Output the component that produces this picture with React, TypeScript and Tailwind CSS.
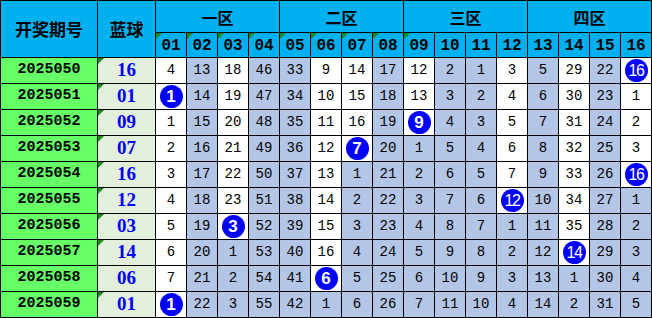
import React from "react";

const rows: { p: string; b: string; v: (number | string)[] }[] = [
  { p: "2025050", b: "16", v: [4, 13, 18, 46, 33, 9, 14, 17, 12, 2, 1, 3, 5, 29, 22, "H16"] },
  { p: "2025051", b: "01", v: ["H1", 14, 19, 47, 34, 10, 15, 18, 13, 3, 2, 4, 6, 30, 23, 1] },
  { p: "2025052", b: "09", v: [1, 15, 20, 48, 35, 11, 16, 19, "H9", 4, 3, 5, 7, 31, 24, 2] },
  { p: "2025053", b: "07", v: [2, 16, 21, 49, 36, 12, "H7", 20, 1, 5, 4, 6, 8, 32, 25, 3] },
  { p: "2025054", b: "16", v: [3, 17, 22, 50, 37, 13, 1, 21, 2, 6, 5, 7, 9, 33, 26, "H16"] },
  { p: "2025055", b: "12", v: [4, 18, 23, 51, 38, 14, 2, 22, 3, 7, 6, "H12", 10, 34, 27, 1] },
  { p: "2025056", b: "03", v: [5, 19, "H3", 52, 39, 15, 3, 23, 4, 8, 7, 1, 11, 35, 28, 2] },
  { p: "2025057", b: "14", v: [6, 20, 1, 53, 40, 16, 4, 24, 5, 9, 8, 2, 12, "H14", 29, 3] },
  { p: "2025058", b: "06", v: [7, 21, 2, 54, 41, "H6", 5, 25, 6, 10, 9, 3, 13, 1, 30, 4] },
  { p: "2025059", b: "01", v: ["H1", 22, 3, 55, 42, 1, 6, 26, 7, 11, 10, 4, 14, 2, 31, 5] },
];

const lastHit: number[] = Array.from({ length: 16 }, (_, c) => {
  let last = -1;
  rows.forEach((r, i) => {
    if (typeof r.v[c] === "string") last = i;
  });
  return last;
});

const Tri = () => (
  <span className="absolute top-0 left-0 w-[6px] h-[6px] bg-[#1a8a1a] [clip-path:polygon(0_0,100%_0,0_100%)]" />
);

const mono = "font-['Liberation_Mono',monospace]";

export default function App() {
  const zones = ["一区", "二区", "三区", "四区"];
  return (
    <div className="w-[652px] h-[318px] bg-black p-px grid gap-px grid-cols-[96px_57px_repeat(16,30px)] grid-rows-[31px_24px_repeat(10,25px)]">
      <div className="row-span-2 bg-[#00b0f0] flex items-center justify-center font-['Noto_Sans_CJK_SC',sans-serif] font-bold text-[17px] text-black">
        开奖期号
      </div>
      <div className="row-span-2 bg-[#00b0f0] flex items-center justify-center font-['Noto_Sans_CJK_SC',sans-serif] font-bold text-[17px] text-black">
        蓝球
      </div>
      {zones.map((z) => (
        <div
          key={z}
          className="col-span-4 bg-[#00b0f0] flex items-center justify-center font-['Noto_Sans_CJK_SC',sans-serif] font-bold text-[16px] text-black"
        >
          {z}
        </div>
      ))}
      {Array.from({ length: 16 }, (_, i) => (
        <div
          key={i}
          className={`relative bg-[#00b0f0] flex items-center justify-center ${mono} font-bold text-[16px] text-black pt-[2px]`}
        >
          {i < 9 && <Tri />}
          {String(i + 1).padStart(2, "0")}
        </div>
      ))}
      {rows.map((r, ri) => (
        <React.Fragment key={r.p}>
          <div className={`bg-[#66ff66] flex items-center justify-center ${mono} font-bold text-[15px] text-black`}>
            {r.p}
          </div>
          <div className="relative bg-[#e2efda] flex items-center justify-center font-['Liberation_Serif',serif] font-bold text-[19px] text-[#0000ff]">
            {r.p !== "2025058" && <Tri />}
            {r.b}
          </div>
          {r.v.map((v, ci) => {
            const white = ri <= lastHit[ci];
            const bg = white ? "bg-white" : "bg-[#b4c6e7]";
            if (typeof v === "string") {
              const n = v.slice(1);
              return (
                <div key={ci} className={`${bg} flex items-center justify-center`}>
                  <span
                    className={`w-[23px] h-[23px] rounded-full bg-[#0000ff] text-white flex items-center justify-center font-['Liberation_Sans',sans-serif] font-bold ${
                      n.length > 1 ? "text-[16px] tracking-[-1.5px] font-normal" : "text-[17px]"
                    }`}
                  >
                    {n}
                  </span>
                </div>
              );
            }
            return (
              <div key={ci} className={`${bg} flex items-center justify-center ${mono} text-[14px] text-black`}>
                {v}
              </div>
            );
          })}
        </React.Fragment>
      ))}
    </div>
  );
}
